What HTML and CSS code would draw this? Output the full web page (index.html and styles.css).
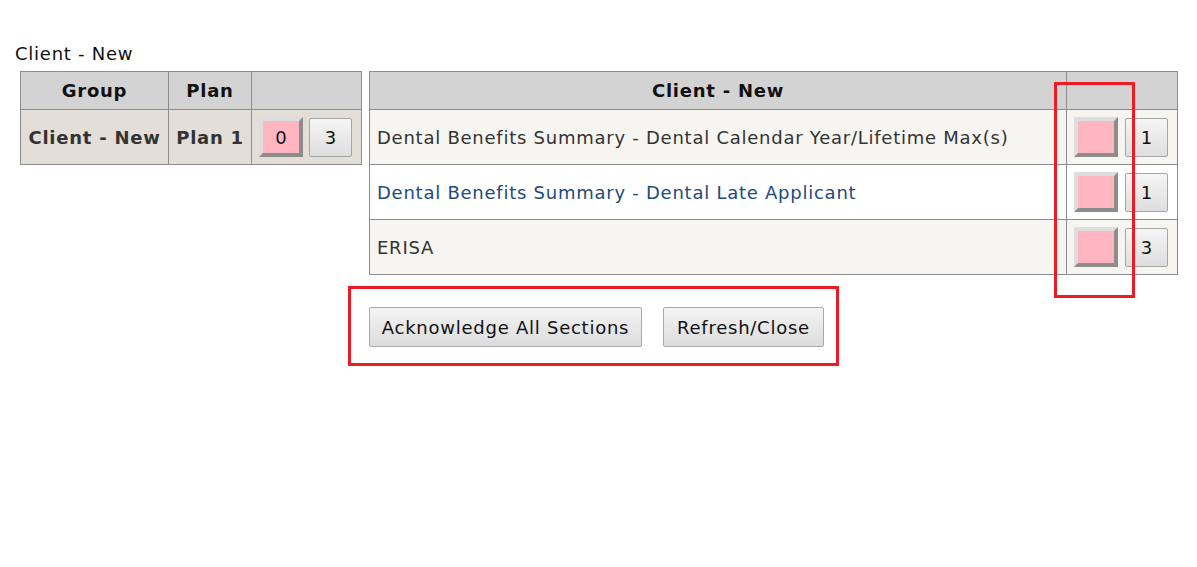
FILE: index.html
```html
<!DOCTYPE html>
<html>
<head>
<meta charset="utf-8">
<link rel="stylesheet" href="styles.css">
</head>
<body>
<div class="page">
  <div class="title">Client - New</div>
  <div class="tables">
    <table class="grid left">
      <thead>
        <tr><th class="c-group">Group</th><th class="c-plan">Plan</th><th class="c-btns"></th></tr>
      </thead>
      <tbody>
        <tr>
          <td class="strong">Client - New</td>
          <td class="strong">Plan 1</td>
          <td class="btns"><span class="pink">0</span><span class="num">3</span></td>
        </tr>
      </tbody>
    </table>
    <div class="right-col">
      <table class="grid right">
        <thead>
          <tr><th class="c-name">Client - New</th><th class="c-btns2"></th></tr>
        </thead>
        <tbody>
          <tr class="odd">
            <td class="name">Dental Benefits Summary - Dental Calendar Year/Lifetime Max(s)</td>
            <td class="btns"><span class="pink"></span><span class="num">1</span></td>
          </tr>
          <tr class="even">
            <td class="name link">Dental Benefits Summary - Dental Late Applicant</td>
            <td class="btns"><span class="pink"></span><span class="num">1</span></td>
          </tr>
          <tr class="odd">
            <td class="name">ERISA</td>
            <td class="btns"><span class="pink"></span><span class="num">3</span></td>
          </tr>
        </tbody>
      </table>
      <div class="actions">
        <button class="btn ack">Acknowledge All Sections</button>
        <button class="btn refresh">Refresh/Close</button>
      </div>
    </div>
  </div>
</div>
<div class="mark mark-col"></div>
<div class="mark mark-actions"></div>
</body>
</html>
```

FILE: styles.css
```css
html, body {
  margin: 0;
  padding: 0;
  background: #ffffff;
}
body {
  font-family: "DejaVu Sans", Verdana, sans-serif;
  font-size: 18px;
  letter-spacing: 0.75px;
  color: #222;
  position: relative;
  width: 1197px;
  height: 567px;
  overflow: hidden;
}
.page {
  padding: 43px 0 0 15px;
}
.title {
  line-height: 21px;
  height: 21px;
  color: #111;
}
.tables {
  display: flex;
  align-items: flex-start;
  gap: 7px;
  margin-top: 7px;
  padding-left: 5px;
}
.grid {
  border-collapse: collapse;
  font-size: 18px;
}
.grid th, .grid td {
  border: 1px solid #8c8c8c;
  padding: 0;
}
.grid th {
  background: #d3d3d3;
  height: 37px;
  font-weight: bold;
  color: #111;
  text-align: center;
}
.grid td {
  height: 54px;
}
.left td {
  background: #e3dfd8;
  text-align: center;
}
.left .strong {
  font-weight: bold;
  color: #333;
}
.c-group { width: 147px; }
.c-plan { width: 82px; }
.c-btns { width: 109px; }
.c-name { width: 696px; }
.c-btns2 { width: 110px; }

.grid td.btns {
  white-space: nowrap;
  text-align: left;
  padding-left: 7px;
  letter-spacing: 0;
}
.pink, .num {
  display: inline-flex;
  align-items: center;
  justify-content: center;
  vertical-align: middle;
  box-sizing: border-box;
  color: #111;
}
.pink {
  width: 44px;
  height: 40px;
  background: #ffb6c1;
  border: 4px solid;
  border-color: #dddddd #8d8d8d #8d8d8d #dddddd;
  margin-right: 6px;
}
.right .pink {
  margin-right: 7px;
}
.num {
  width: 43px;
  height: 39px;
  border: 1px solid #a6a6a6;
  border-radius: 2px;
  background: linear-gradient(#f5f5f5, #dedede);
}
.right .name {
  padding-left: 7px;
  color: #333;
}
.right .link {
  color: #214a80;
}
.right tr.odd td { background: #f6f5f1; }
.right tr.even td { background: #ffffff; }

.right-col {
  display: flex;
  flex-direction: column;
}
.actions {
  display: flex;
  gap: 21px;
  margin-top: 32px;
}
.btn {
  font-family: "DejaVu Sans", Verdana, sans-serif;
  font-size: 18px;
  letter-spacing: 0.75px;
  color: #111;
  height: 40px;
  padding: 0;
  border: 1px solid #a9a9a9;
  border-radius: 2px;
  background: linear-gradient(#f4f4f4, #dcdcdc);
}
.ack { width: 273px; }
.refresh { width: 161px; }

.mark {
  position: absolute;
  border: 3px solid #ed1c24;
  box-sizing: border-box;
}
.mark-col {
  left: 1054px;
  top: 82px;
  width: 81px;
  height: 216px;
}
.mark-actions {
  left: 348px;
  top: 286px;
  width: 491px;
  height: 80px;
}
```
